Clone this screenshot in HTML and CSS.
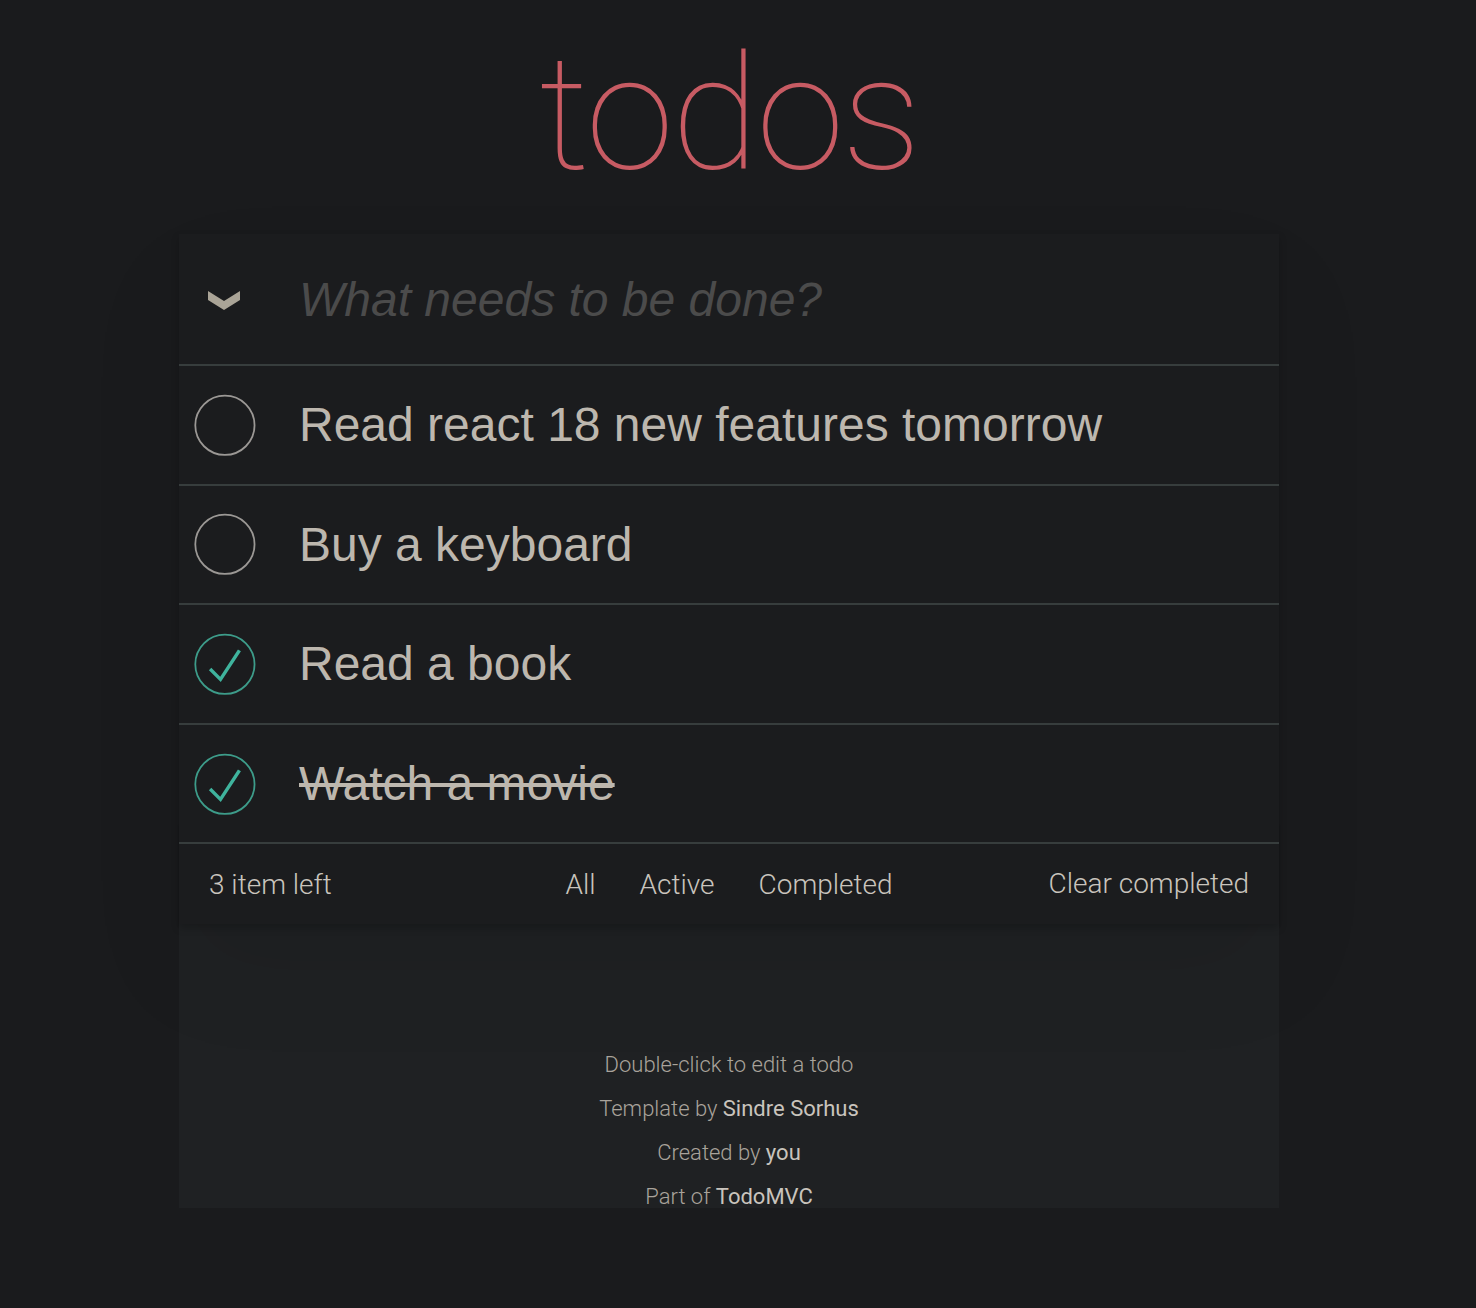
FILE: index.html
```html
<!DOCTYPE html>
<html lang="en">
<head>
    <meta charset="UTF-8">
    <title>React • TodoMVC</title>
    <link rel="stylesheet" href="styles.css">
</head>
<body>
    <div class="page">
        <section class="todoapp">
            <header class="header">
                <h1 class="title">todos</h1>
                <div class="new-row">
                    <label class="toggle-all" title="Mark all as complete">
                        <svg width="32" height="19" viewBox="0 0 32 19"><polygon points="0,0 16,10 32,0 32,9 16,19 0,9" fill="currentColor"/></svg>
                    </label>
                    <input class="new-todo" placeholder="What needs to be done?" autofocus>
                </div>
            </header>

            <div class="main">
                <ul class="todo-list">
                    <li class="todo">
                        <svg class="toggle" width="80" height="80" viewBox="-10 -18 100 135"><circle cx="50" cy="50" r="50" fill="none" stroke="currentColor" stroke-width="3"/></svg>
                        <label>Read react 18 new features tomorrow</label>
                    </li>
                    <li class="todo">
                        <svg class="toggle" width="80" height="80" viewBox="-10 -18 100 135"><circle cx="50" cy="50" r="50" fill="none" stroke="currentColor" stroke-width="3"/></svg>
                        <label>Buy a keyboard</label>
                    </li>
                    <li class="todo done">
                        <svg class="toggle" width="80" height="80" viewBox="-10 -18 100 135"><circle cx="50" cy="50" r="50" fill="none" stroke="currentColor" stroke-width="3"/><path class="tick" d="M72 25L42 71 27 56l-4 4 20 20 34-52z"/></svg>
                        <label>Read a book</label>
                    </li>
                    <li class="todo done completed">
                        <svg class="toggle" width="80" height="80" viewBox="-10 -18 100 135"><circle cx="50" cy="50" r="50" fill="none" stroke="currentColor" stroke-width="3"/><path class="tick" d="M72 25L42 71 27 56l-4 4 20 20 34-52z"/></svg>
                        <label>Watch a movie</label>
                    </li>
                </ul>
            </div>

            <footer class="footer">
                <span class="todo-count">3 item left</span>
                <ul class="filters">
                    <li><a href="#/" class="selected">All</a></li>
                    <li><a href="#/active">Active</a></li>
                    <li><a href="#/completed">Completed</a></li>
                </ul>
                <button class="clear-completed">Clear completed</button>
            </footer>
        </section>

        <footer class="info">
            <p>Double-click to edit a todo</p>
            <p>Template by <a href="#">Sindre Sorhus</a></p>
            <p>Created by <a href="#">you</a></p>
            <p>Part of <a href="#">TodoMVC</a></p>
        </footer>
    </div>
</body>
</html>
```

FILE: styles.css
```css
:root {
    --bg-page: #1a1b1d;
    --bg-body: #1f2123;
    --bg-app: #1b1c1e;
    --line: #373d3d;
    --text-item: #bdb7ae;
    --text-soft: #c9c4bd;
    --text-info: #a9a39b;
    --placeholder: #4b4b4b;
    --accent-red: #c75b63;
    --ring: #9b9895;
    --ring-done: #3d9c8a;
    --tick: #3fb39d;
    --paper: #202426;
}
html {
    background: var(--bg-page);
}
body {
    margin: 0;
    padding: 234px 18px 0 0;
    color: var(--text-soft);
    font: 300 28px/1.4em Roboto, 'Liberation Sans', sans-serif;
}
ul {
    margin: 0;
    padding: 0;
    list-style: none;
}
.page {
    display: flow-root;
    max-width: 1100px;
    margin: 0 auto;
    background: var(--bg-body);
}
.todoapp {
    position: relative;
    background: var(--bg-app);
    box-shadow: 0 4px 8px 0 rgba(0, 0, 0, 0.2), 0 50px 100px 0 rgba(0, 0, 0, 0.06);
}
.title {
    position: absolute;
    top: -200px;
    left: 0;
    right: 0;
    margin: 0;
    font-size: 160px;
    line-height: 160px;
    font-weight: 100;
    text-align: center;
    color: var(--accent-red);
    letter-spacing: -2.5px;
}
.new-row {
    display: flex;
    align-items: center;
    height: 130px;
}
.toggle-all {
    width: 90px;
    display: flex;
    justify-content: center;
    color: #aaa497;
    padding-top: 2px;
}
.new-todo {
    flex: 1;
    height: 130px;
    margin: 0;
    padding: 0 32px 0 30px;
    border: none;
    outline: none;
    background: transparent;
    color: var(--text-item);
    font: 400 48px/1.4em 'Liberation Sans', Arial, sans-serif;
}
.new-todo::placeholder {
    font-style: italic;
    color: var(--placeholder);
}
.main {
    border-top: 2px solid var(--line);
}
.todo {
    display: flex;
    align-items: center;
    border-bottom: 2px solid var(--line);
}
.todo:last-child {
    border-bottom: none;
}
.toggle {
    flex: none;
    color: var(--ring);
}
.todo label {
    display: block;
    padding: 30px 30px 30px 40px;
    font: 400 48px/1.2 'Liberation Sans', Arial, sans-serif;
    color: var(--text-item);
}
.done .toggle {
    color: var(--ring-done);
}
.tick {
    fill: var(--tick);
}
.completed label {
    text-decoration: line-through;
}
.footer {
    position: relative;
    display: grid;
    grid-template-columns: 1fr auto 1fr;
    align-items: center;
    height: 40px;
    padding: 20px 30px;
    border-top: 2px solid var(--line);
    color: var(--text-soft);
}
.footer::before {
    content: '';
    position: absolute;
    left: 0;
    right: 0;
    bottom: 0;
    height: 100px;
    z-index: -1;
    box-shadow: 0 2px 2px rgba(0, 0, 0, 0.2),
        0 16px 0 -6px var(--paper),
        0 18px 2px -6px rgba(0, 0, 0, 0.2),
        0 32px 0 -12px var(--paper),
        0 34px 4px -12px rgba(0, 0, 0, 0.2);
}
.todo-count {
    text-align: left;
}
.filters {
    display: flex;
}
.filters a {
    margin: 0 6px;
    padding: 6px 14px;
    border: 2px solid transparent;
    border-radius: 6px;
    color: inherit;
    text-decoration: none;
}
.clear-completed {
    justify-self: end;
    margin: 0;
    padding: 0;
    border: none;
    background: none;
    color: inherit;
    font: inherit;
    line-height: 38px;
    cursor: pointer;
}
.info {
    margin-top: 130px;
    color: var(--text-info);
    font-size: 22px;
    text-align: center;
}
.info p {
    line-height: 1;
    margin: 22px 0;
}
.info p:last-child {
    margin-bottom: 0;
}
.info a {
    color: var(--text-soft);
    font-weight: 400;
    text-decoration: none;
}
```
